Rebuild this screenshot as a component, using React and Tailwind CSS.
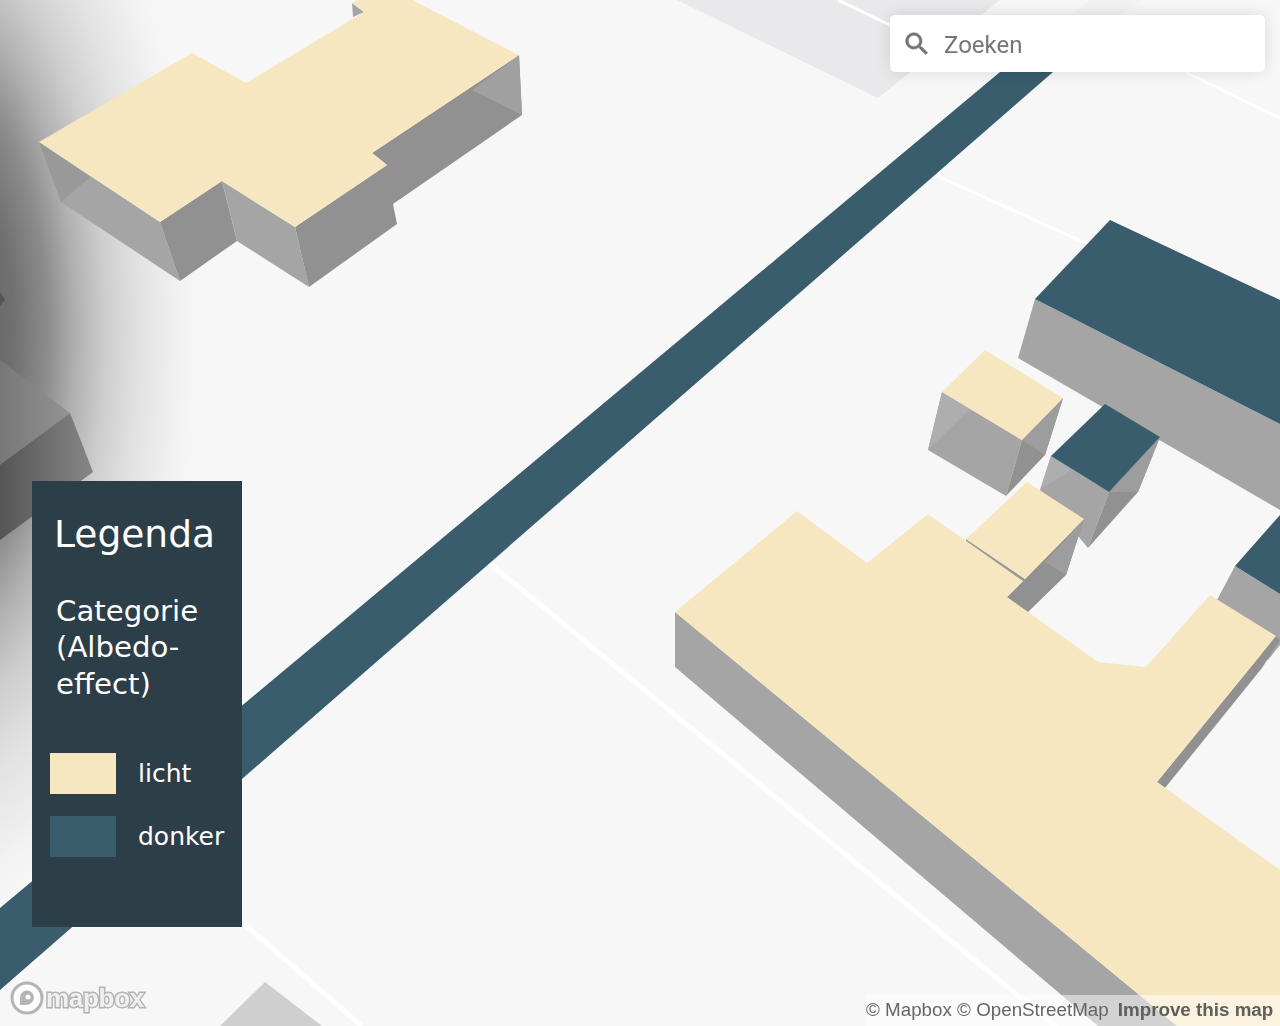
import React from 'react';

const side = '#a5a5a5';
const dark = '#919191';
const cream = '#f6e7c1';
const teal = '#395d6c';

const Map = () => (
    <svg className="absolute inset-0 w-full h-full blur-[0.4px]" viewBox="0 0 1280 1026">
        <defs>
            <radialGradient id="fog" gradientUnits="userSpaceOnUse" cx="-70" cy="330" r="1" gradientTransform="translate(-70 330) scale(280 620) translate(70 -330)">
                <stop offset="0" stopColor="#555555" />
                <stop offset="0.3" stopColor="#707070" />
                <stop offset="0.42" stopColor="#8c8c8c" />
                <stop offset="0.52" stopColor="#b0b0b0" />
                <stop offset="0.63" stopColor="#cecece" />
                <stop offset="0.75" stopColor="#e2e2e2" />
                <stop offset="0.88" stopColor="#f0f0f0" />
                <stop offset="1" stopColor="#f7f7f7" stopOpacity="0" />
            </radialGradient>
            <linearGradient id="oldTop" gradientUnits="userSpaceOnUse" x1="0" y1="0" x2="90" y2="0">
                <stop offset="0" stopColor="#777777" />
                <stop offset="1" stopColor="#9c9c9c" />
            </linearGradient>
            <linearGradient id="oldFront" gradientUnits="userSpaceOnUse" x1="0" y1="0" x2="90" y2="0">
                <stop offset="0" stopColor="#555555" />
                <stop offset="1" stopColor="#858585" />
            </linearGradient>
        </defs>

        {/* fog on the horizon */}
        <rect x="-10" y="-10" width="400" height="1036" fill="url(#fog)" />

        {/* ground */}
        <polygon points="677,0 878,98 1000,0" fill="#e9e9eb" />
        <g stroke="#ffffff" strokeWidth="3" fill="none">
            <path d="M838 0 L900 30" />
            <path d="M1185 72 L1280 118" />
            <path d="M935 175 L1090 245" />
            <path d="M488 562 L1060 1030" strokeWidth="5" />
            <path d="M245 925 L362 1026" strokeWidth="5" />
        </g>
        <polygon points="1000,72 1090,0 1140,0 1053,72" fill="#f2f2f2" />
        <polygon points="265,982 220,1026 322,1026" fill="#cfcfcf" />
        <polygon points="0,908 1000,72 1053,72 0,990" fill={teal} />

        <polygon points="0,360 70,413 0,465" fill="url(#oldTop)" />
        <polygon points="0,465 70,413 93,472 0,540" fill="url(#oldFront)" />
        <polygon points="0,292 5,300 0,306" fill="#555555" />

        {/* building top left */}
        <polygon points="352,3 364,12 353,17" fill={side} />
        <polygon points="39,142 160,222 180,281 61,202" fill={side} />
        <polygon points="39,142 90,177 61,202" fill="#999999" />
        <polygon points="160,222 222,181 237,241 180,281" fill={dark} />
        <polygon points="222,181 295,227 309,287 237,241" fill={side} />
        <polygon points="295,227 387,165 372,153 519,55 522,115 393,204 397,224 309,287" fill={dark} />
        <polygon points="519,55 522,115 472,90" fill="#a0a0a0" />
        <polygon points="39,142 192,53 246,83 364,12 352,3 357,0 412,0 519,55 372,153 387,165 295,227 222,181 160,222" fill={cream} />

        {/* right cluster */}
        <polygon points="1035,299 1280,424 1280,510 1018,358" fill={side} />
        <polygon points="1110,220 1280,300 1280,424 1035,299" fill={teal} />

        <polygon points="942,392 1022,440 1006,496 928,450" fill={side} />
        <polygon points="942,392 970,409 928,450" fill="#aeaeae" />
        <polygon points="1022,440 1063,398 1045,455 1006,496" fill={dark} />
        <polygon points="1022,440 1063,398 1045,455" fill="#9d9d9d" />
        <polygon points="985,350 1063,398 1022,440 942,392" fill={cream} />

        <polygon points="1051,456 1109,492 1088,548 1040,490" fill={side} />
        <polygon points="1051,456 1072,469 1040,490" fill="#aeaeae" />
        <polygon points="1109,492 1160,437 1138,492 1088,548" fill={dark} />
        <polygon points="1109,492 1160,437 1138,492" fill="#9d9d9d" />
        <polygon points="1105,404 1160,437 1109,492 1051,456" fill={teal} />

        <polygon points="1235,566 1280,594 1280,645 1268,660 1210,595 1217,600" fill={side} />
        <polygon points="1280,515 1235,566 1280,594" fill={teal} />

        <polygon points="1084,519 1066,575 1028,612 1006,598 1025,579" fill={dark} />
        <polygon points="1084,519 1066,575 1045,562" fill="#9d9d9d" />
        <polygon points="966,539 1025,579 1025,583 966,543" fill="#999999" />
        <polygon points="1027,482 1084,519 1025,579 966,539" fill={cream} />

        <polygon points="675,612 1177,1026 1098,1026 675,667" fill={side} />
        <polygon points="1276,636 1157,782 1165,788 1262,668 1280,640" fill={dark} />
        <polygon points="675,612 797,511 867,563 928,514 1023,581 1007,597 1028,612 1098,662 1146,667 1210,595 1276,636 1157,782 1280,870 1280,1026 1177,1026" fill={cream} />
    </svg>
);

const LegendRow = ({ color, label }) => (
    <div className="flex items-center h-[41px]">
        <div className={`w-[66px] h-[41px] ${color}`} />
        <span className="ml-[22px] text-[25px] leading-[41px] whitespace-nowrap">{label}</span>
    </div>
);

const Legend = () => (
    <div className="absolute left-[32px] top-[481px] w-[209.5px] h-[446px] bg-[#2c3e48] text-white font-['DejaVu_Sans',sans-serif] pt-[31px]">
        <h2 className="ml-[22px] text-[37.6px] leading-[44px]">Legenda</h2>
        <p className="ml-[24px] mt-[37px] text-[29.2px] leading-[36.4px]">Categorie<br />(Albedo-<br />effect)</p>
        <div className="ml-[18px] mt-[51px] flex flex-col gap-[22px]">
            <LegendRow color="bg-[#f6e7c1]" label="licht" />
            <LegendRow color="bg-[#395d6c]" label="donker" />
        </div>
    </div>
);

const Search = () => (
    <div className="absolute left-[890px] top-[15px] w-[375px] h-[57px] bg-white rounded-[5px] shadow-[0_0_16px_rgba(0,0,0,0.12)] flex items-center pl-[12px] pt-[2px]">
        <svg className="w-[30px] h-[30px] text-[#757575] blur-[0.4px] -mt-[2px]" viewBox="0 0 24 24" fill="currentColor" stroke="currentColor" strokeWidth="0.5">
            <path d="M15.5 14h-.79l-.28-.27C15.41 12.59 16 11.11 16 9.5 16 5.91 13.09 3 9.5 3S3 5.91 3 9.5 5.91 16 9.5 16c1.61 0 3.09-.59 4.23-1.57l.27.28v.79l5 4.99L20.49 19l-4.99-5zm-6 0C7.01 14 5 11.99 5 9.5S7.01 5 9.5 5 14 7.01 14 9.5 11.99 14 9.5 14z" />
        </svg>
        <span className="ml-[12px] text-[24px] text-[#757575] font-['Roboto',sans-serif] blur-[0.4px]">Zoeken</span>
    </div>
);

const MapboxLogo = () => (
    <div className="absolute left-[10px] bottom-[11px] flex items-center gap-[2px] blur-[0.5px]">
        <svg className="w-[34px] h-[34px]" viewBox="0 0 34 34">
            <circle cx="17" cy="17" r="15" fill="#ffffff" fillOpacity="0.7" stroke="#b4b4b4" strokeWidth="3" />
            <path d="M10 17a7 7 0 0 1 14-1c0 5-4 8-9 8h-5z" fill="#b4b4b4" />
            <circle cx="18" cy="16" r="2.5" fill="#ffffff" />
        </svg>
        <span className="text-[26px] leading-[28px] font-bold text-[#f0f0f0] font-['Liberation_Sans',sans-serif] [-webkit-text-stroke:3px_#b4b4b4] [paint-order:stroke_fill] tracking-[-0.3px]">mapbox</span>
    </div>
);

const Attribution = () => (
    <div className="absolute right-0 bottom-0 h-[31px] w-[415px] bg-white/50 flex items-center pl-[1px] text-[18.8px] text-[#666666] font-['Liberation_Sans',sans-serif] whitespace-nowrap">
        <span className="blur-[0.4px]">© Mapbox © OpenStreetMap</span>
        <span className="ml-[9px] font-bold text-[#5f5f5f] blur-[0.4px]">Improve this map</span>
    </div>
);

export default function App() {
    return (
        <div className="relative w-[1280px] h-[1026px] overflow-hidden bg-[#f7f7f7]">
            <Map />
            <Search />
            <Legend />
            <MapboxLogo />
            <Attribution />
        </div>
    );
}
